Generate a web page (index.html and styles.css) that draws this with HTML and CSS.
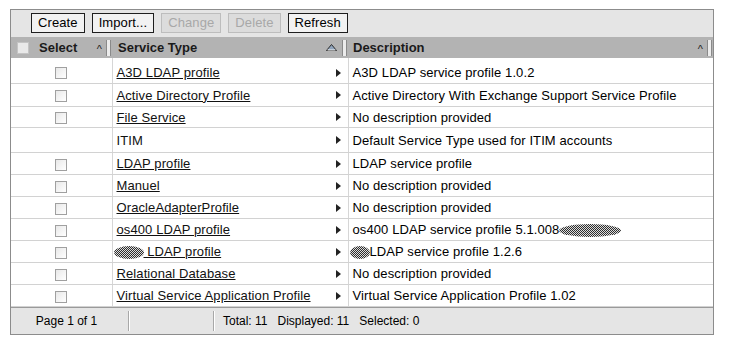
FILE: index.html
```html
<!DOCTYPE html>
<html lang="en">
<head>
    <meta charset="UTF-8">
    <title>Service Types</title>
    <link rel="stylesheet" href="styles.css">
</head>
<body>
    <div class="grid-box">
        <div class="toolbar">
            <button class="btn">Create</button>
            <button class="btn">Import...</button>
            <button class="btn" disabled>Change</button>
            <button class="btn" disabled>Delete</button>
            <button class="btn">Refresh</button>
        </div>

        <table class="grid">
            <thead>
                <tr>
                    <th class="col-select">
                        <div class="th-inner">
                            <span class="check head-check"></span>
                            <span class="th-label">Select</span>
                            <span class="caret">^</span>
                            <span class="handle"></span>
                        </div>
                    </th>
                    <th class="col-type">
                        <div class="th-inner">
                            <span class="th-label">Service Type</span>
                            <svg class="sort-up" width="11" height="7" viewBox="0 0 11 7">
                                <path d="M0.5 6.5 L5.5 0.5 L10.5 6.5 Z" fill="#8fa3bb" stroke="#2b2b2b" stroke-width="1"/>
                                <path d="M1.5 6 L9.5 6" stroke="#f4f4f4" stroke-width="1"/>
                            </svg>
                            <span class="handle"></span>
                        </div>
                    </th>
                    <th class="col-desc">
                        <div class="th-inner">
                            <span class="th-label">Description</span>
                            <span class="caret">^</span>
                            <span class="handle"></span>
                        </div>
                    </th>
                </tr>
            </thead>
            <tbody>
                <tr class="first">
                    <td class="cell-check"><span class="check"></span></td>
                    <td class="cell-type"><a href="#">A3D LDAP profile</a><span class="arrow"></span></td>
                    <td>A3D LDAP service profile 1.0.2</td>
                </tr>
                <tr class="second">
                    <td class="cell-check"><span class="check"></span></td>
                    <td class="cell-type"><a href="#">Active Directory Profile</a><span class="arrow"></span></td>
                    <td>Active Directory With Exchange Support Service Profile</td>
                </tr>
                <tr class="short">
                    <td class="cell-check"><span class="check"></span></td>
                    <td class="cell-type"><a href="#">File Service</a><span class="arrow"></span></td>
                    <td>No description provided</td>
                </tr>
                <tr class="tall">
                    <td class="cell-check"></td>
                    <td class="cell-type"><span class="plain">ITIM</span><span class="arrow"></span></td>
                    <td>Default Service Type used for ITIM accounts</td>
                </tr>
                <tr>
                    <td class="cell-check"><span class="check"></span></td>
                    <td class="cell-type"><a href="#">LDAP profile</a><span class="arrow"></span></td>
                    <td>LDAP service profile</td>
                </tr>
                <tr>
                    <td class="cell-check"><span class="check"></span></td>
                    <td class="cell-type"><a href="#">Manuel</a><span class="arrow"></span></td>
                    <td>No description provided</td>
                </tr>
                <tr>
                    <td class="cell-check"><span class="check"></span></td>
                    <td class="cell-type"><a href="#">OracleAdapterProfile</a><span class="arrow"></span></td>
                    <td>No description provided</td>
                </tr>
                <tr>
                    <td class="cell-check"><span class="check"></span></td>
                    <td class="cell-type"><a href="#">os400 LDAP profile</a><span class="arrow"></span></td>
                    <td>os400 LDAP service profile 5.1.008<span class="blot blot-wide"></span></td>
                </tr>
                <tr>
                    <td class="cell-check"><span class="check"></span></td>
                    <td class="cell-type"><a href="#"><span class="blot blot-name"></span> LDAP profile</a><span class="arrow"></span></td>
                    <td><span class="blot blot-desc"></span>LDAP service profile 1.2.6</td>
                </tr>
                <tr>
                    <td class="cell-check"><span class="check"></span></td>
                    <td class="cell-type"><a href="#">Relational Database</a><span class="arrow"></span></td>
                    <td>No description provided</td>
                </tr>
                <tr>
                    <td class="cell-check"><span class="check"></span></td>
                    <td class="cell-type"><a href="#">Virtual Service Application Profile</a><span class="arrow"></span></td>
                    <td>Virtual Service Application Profile 1.02</td>
                </tr>
            </tbody>
        </table>

        <div class="pager">
            <div class="pager-cell pager-page">Page 1 of 1</div>
            <div class="pager-cell pager-empty"></div>
            <div class="pager-cell pager-stats">Total: 11&nbsp;&nbsp; Displayed: 11&nbsp;&nbsp; Selected: 0</div>
        </div>
    </div>
</body>
</html>
```

FILE: styles.css
```css
body {
    margin: 0;
    padding: 0;
    background-color: white;
    color: black;
    font-family: "Liberation Sans", Arial, sans-serif;
    font-size: 13px;
}

.grid-box {
    margin: 9px 0 0 10px;
    width: 702px;
    border: 1px solid #8c8c8c;
    background-color: white;
}

/* toolbar */
.toolbar {
    display: flex;
    gap: 7px;
    height: 27px;
    padding: 3px 0 0 20px;
    box-sizing: border-box;
    background-color: #e5e5e5;
}

.btn {
    height: 20px;
    padding: 0 6px;
    border: 1px solid #1e1e1e;
    background-color: #f2f2f2;
    font-family: "Liberation Sans", Arial, sans-serif;
    font-size: 13px;
    color: black;
    line-height: 18px;
    letter-spacing: 0.1px;
}

.btn:disabled {
    border-color: #bdbdbd;
    background-color: #dcdcdc;
    color: #a8a8a8;
}

/* table */
.grid {
    width: 100%;
    border-collapse: collapse;
    table-layout: fixed;
}

.col-select {
    width: 101px;
}

.col-type {
    width: 236px;
}

.grid th {
    height: 21px;
    padding: 0;
    background-color: #b3b3b3;
    text-align: left;
    font-weight: bold;
    font-size: 13px;
    color: #1a1a1a;
}

.th-inner {
    display: flex;
    align-items: center;
    height: 21px;
}

.col-select .th-inner {
    padding-left: 6px;
}

.col-type .th-inner {
    padding-left: 6px;
}

.col-desc .th-inner {
    padding-left: 5px;
}

.th-label {
    flex-grow: 1;
}

.col-select .th-label {
    padding-left: 10px;
}

.caret {
    font-weight: normal;
    font-size: 11px;
    margin-right: 4px;
    padding-top: 2px;
    color: #222;
}

.sort-up {
    margin-right: 5px;
}

.handle {
    width: 3px;
    height: 16px;
    margin-right: 1px;
    background-color: #ececec;
    border-left: 1px solid #8a8a8a;
    border-right: 1px solid #8a8a8a;
}

.check {
    display: inline-block;
    width: 10px;
    height: 10px;
    border: 1px solid #a0a0a0;
    background: linear-gradient(135deg, #e8e8e8, #ffffff);
    box-sizing: content-box;
    vertical-align: middle;
}

.head-check {
    border-color: #c4c4c4;
    background: #e9e9e9;
}

.grid td {
    height: 21px;
    padding: 0 4px;
    border-bottom: 1px solid #d2d2d2;
    border-right: 1px solid #d6d6d6;
    white-space: nowrap;
    overflow: hidden;
    letter-spacing: 0.1px;
}

.grid td:last-child {
    border-right: none;
}

.grid tr.first td {
    height: 22px;
    padding-top: 3px;
}

.grid tr.second td {
    height: 22px;
}

.grid tr.short td {
    height: 20px;
}

.grid tr.tall td {
    height: 24px;
}

.cell-check {
    text-align: center;
}

.cell-type {
    position: relative;
}

.cell-type a,
.cell-type .plain {
    color: #111;
}

.arrow {
    position: absolute;
    right: 7px;
    top: 50%;
    margin-top: -4px;
    width: 0;
    height: 0;
    border-top: 4px solid transparent;
    border-bottom: 4px solid transparent;
    border-left: 5px solid #222;
}

.first .arrow {
    margin-top: -2px;
}

/* redacted parts */
.blot {
    display: inline-block;
    height: 13px;
    border-radius: 50%;
    vertical-align: middle;
    background: repeating-conic-gradient(#2e2e2e 0 25%, #dcdcdc 0 50%) 0 0 / 2px 2px;
}

.blot-wide {
    width: 62px;
}

.blot-name {
    width: 30px;
    margin-left: -3px;
}

.blot-desc {
    width: 20px;
    margin-left: -3px;
}

/* pager */
.pager {
    display: flex;
    height: 27px;
    border-top: 1px solid #9a9a9a;
    background-color: #e5e5e5;
    font-size: 12px;
    box-sizing: border-box;
}

.pager-cell {
    display: flex;
    align-items: center;
    border-right: 1px solid #a8a8a8;
    box-shadow: 1px 0 0 white;
    margin: 3px 0;
}

.pager-page {
    width: 111px;
    padding-right: 6px;
    justify-content: center;
}

.pager-empty {
    width: 84px;
}

.pager-stats {
    padding-left: 9px;
    border-right: none;
    box-shadow: none;
}
```
